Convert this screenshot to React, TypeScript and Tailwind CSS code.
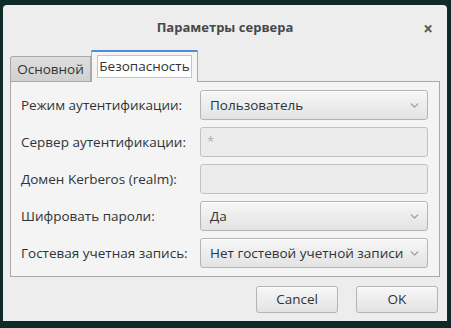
import { ChevronDown } from 'lucide-react';

// GNOME-style "server settings" dialog, security tab

const font = { fontFamily: '"Open Sans", "DejaVu Sans", sans-serif' };

function Combo({ value }: { value: string }) {
  return (
    <div className="flex h-[30px] w-[228px] items-center justify-between rounded-[3px] border border-[#b4b4b4] bg-gradient-to-b from-[#f7f7f7] to-[#e3e3e3] pl-[9px] pr-[6px] text-[13.5px] text-[#2e3436] shadow-[inset_0_1px_0_#fff]">
      <span>{value}</span>
      <ChevronDown className="h-[13px] w-[13px] text-[#9c9c9c]" strokeWidth={2.5} />
    </div>
  );
}

function Entry({ placeholder }: { placeholder?: string }) {
  return (
    <div className="flex h-[30px] w-[228px] items-center rounded-[3px] border border-[#c2c2c2] bg-[#ececec] px-[6px] text-[13px] text-[#b0b0b0]">
      {placeholder}
    </div>
  );
}

const rows: { label: string; control: JSX.Element }[] = [
  { label: 'Режим аутентификации:', control: <Combo value="Пользователь" /> },
  { label: 'Сервер аутентификации:', control: <Entry placeholder="*" /> },
  { label: 'Домен Kerberos (realm):', control: <Entry /> },
  { label: 'Шифровать пароли:', control: <Combo value="Да" /> },
  { label: 'Гостевая учетная запись:', control: <Combo value="Нет гостевой учетной записи" /> },
];

export default function App() {
  return (
    <div className="h-[328px] w-[451px] bg-[#0e2b29] pl-[3px] pt-[5px]" style={font}>
      <div className="flex h-[316px] w-[444px] flex-col rounded-t-[4px] bg-[#ededed]">
        {/* header */}
        <div className="relative flex h-[45px] items-center justify-center">
          <span className="text-[13px] font-bold text-[#454a4b]">Параметры сервера</span>
          <span className="absolute right-[14px] top-[11px] text-[17px] font-bold text-[#555b5c]">×</span>
        </div>

        {/* tabs */}
        <div className="ml-[7px] flex items-end">
          <div className="flex h-[25px] w-[81px] items-center justify-center rounded-tl-[3px] border border-b-0 border-[#a9a9a9] bg-gradient-to-b from-[#dedede] to-[#d0d0d0] text-[13.5px] text-[#2e3436]">
            Основной
          </div>
          <div className="relative z-10 -mb-px flex h-[32px] w-[107px] flex-col border-x border-[#a9a9a9] bg-[#f4f4f4]">
            <div className="h-[2px] bg-[#4a90d9]" />
            <div className="mx-[5px] mt-[3px] flex h-[23px] items-center justify-center border border-[#c4c4c4] bg-white text-[13.5px] text-[#2e3436]">
              Безопасность
            </div>
          </div>
        </div>

        {/* panel */}
        <div className="ml-[7px] flex h-[196px] w-[430px] flex-col gap-[7px] border border-[#a9a9a9] bg-[#f4f4f4] pl-[10px] pt-[8px]">
          {rows.map((r) => (
            <div key={r.label} className="flex items-center">
              <span className="w-[179px] text-[13.5px] text-[#2e3436]">{r.label}</span>
              {r.control}
            </div>
          ))}
        </div>

        {/* buttons */}
        <div className="mr-[9px] mt-[9px] flex justify-end gap-[18px]">
          {['Cancel', 'OK'].map((b) => (
            <div
              key={b}
              className="flex h-[27px] w-[82px] items-center justify-center rounded-[3px] border border-[#b4b4b4] bg-gradient-to-b from-[#f7f7f7] to-[#e3e3e3] text-[13.5px] text-[#2e3436] shadow-[inset_0_1px_0_#fff]"
            >
              {b}
            </div>
          ))}
        </div>
      </div>
    </div>
  );
}
